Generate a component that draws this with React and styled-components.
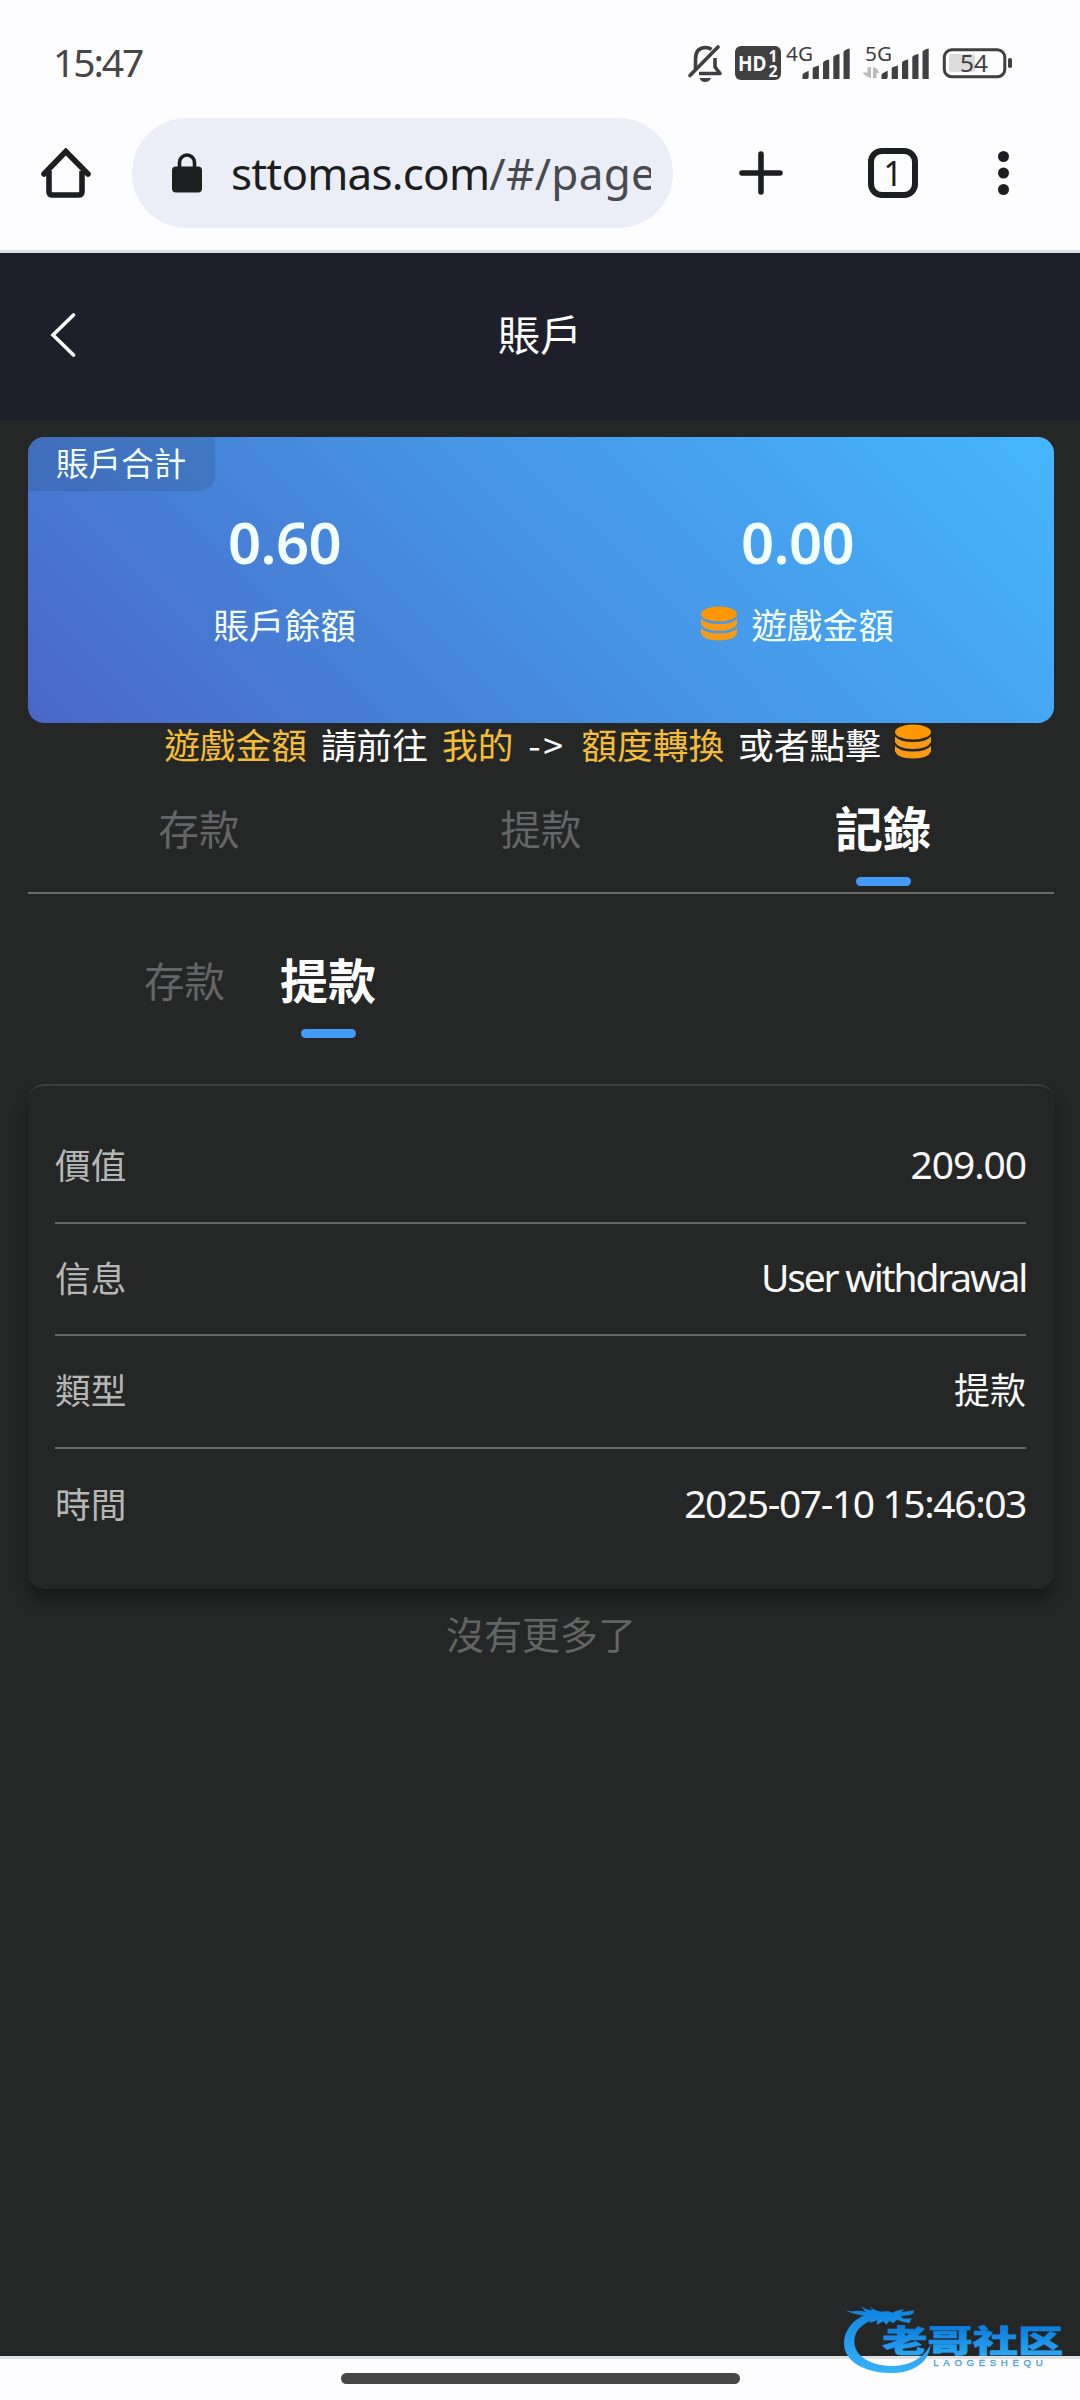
import React from 'react';
import styled, { createGlobalStyle } from 'styled-components';

// Styles
//----------------------------------------------------------------------------------//

const GlobalStyle = createGlobalStyle`
    * {
        box-sizing: border-box;
    }

    body {
        margin: 0;
        background-color: #252726;
        font-family: 'Noto Sans', 'Noto Sans CJK TC', sans-serif;
    }

    svg {
        display: block;
        flex: none;
    }
`;

const Screen = styled.div`
    position: relative;
    display: flex;
    flex-direction: column;
    width: 1080px;
    height: 2400px;
    overflow: hidden;
    background-color: #252726;
`;

const StatusBar = styled.div`
    display: flex;
    align-items: flex-start;
    justify-content: space-between;
    height: 118px;
    padding: 35px 64px 0 53px;
    background-color: #fdfdff;
`;

const Clock = styled.span`
    margin-top: 7px;
    font-size: 39px;
    line-height: 40px;
    letter-spacing: -2.1px;
    color: #464646;
`;

const StatusIcons = styled.div`
    display: flex;
`;

const Toolbar = styled.div`
    display: flex;
    align-items: center;
    height: 135px;
    padding: 0 71px 22px 41px;
    background-color: #fdfdff;
    border-bottom: 3px solid #dee1e7;
`;

const AddressBar = styled.div`
    display: flex;
    align-items: center;
    width: 541px;
    height: 110px;
    margin-left: 41px;
    margin-right: 66px;
    padding: 0 22px 0 40px;
    border-radius: 55px;
    background-color: #ebeef7;
`;

const Url = styled.div`
    flex: 1;
    margin-left: 29px;
    overflow: hidden;
    white-space: nowrap;
    font-size: 44px;
    line-height: 60px;
    letter-spacing: -0.8px;
    color: #1c1e20;
`;

const UrlPath = styled.span`
    letter-spacing: 0.3px;
    color: #474a51;
`;

const TabCount = styled.div`
    display: flex;
    align-items: center;
    justify-content: center;
    width: 50px;
    height: 50px;
    margin-left: 85px;
    margin-right: 80px;
    border: 6px solid #1d1e20;
    border-radius: 14px;
    font-size: 34px;
    line-height: 34px;
    color: #1d1e20;
`;

const Header = styled.header`
    display: grid;
    grid-template-columns: 80px 1fr 80px;
    align-items: center;
    height: 167px;
    padding-bottom: 3px;
    background-color: #1e1f2b;
`;

const BackButton = styled.button`
    padding: 0 0 0 50px;
    border: none;
    background: none;
`;

const Title = styled.h1`
    margin: 0;
    padding-bottom: 4px;
    text-align: center;
    font-family: 'Noto Sans CJK TC', sans-serif;
    font-size: 42px;
    font-weight: 400;
    line-height: 60px;
    color: #fff;
`;

const Content = styled.main`
    flex: 1;
    padding: 17px 26px 0 28px;
`;

const BalanceCard = styled.section`
    height: 286px;
    border-radius: 16px;
    overflow: hidden;
    background: linear-gradient(45deg, #4a67c8 0%, #4683d8 33%, #469ae9 60%, #46b6ff 100%);
    color: #f4ffff;
`;

const CardTag = styled.div`
    width: 187px;
    height: 54px;
    padding-left: 28px;
    border-bottom-right-radius: 16px;
    background-color: rgba(40, 70, 110, 0.2);
    font-family: 'Noto Sans CJK TC', sans-serif;
    font-size: 32.6px;
    line-height: 49px;
`;

const Balances = styled.div`
    display: grid;
    grid-template-columns: 1fr 1fr;
`;

const Balance = styled.div`
    display: flex;
    flex-direction: column;
    align-items: center;
    padding-top: 16px;
`;

const Amount = styled.div`
    font-size: 58px;
    font-weight: 600;
    line-height: 70px;
    letter-spacing: -0.6px;
`;

const AmountLabel = styled.div`
    display: flex;
    gap: 14px;
    margin-top: 22px;
    font-family: 'Noto Sans CJK TC', sans-serif;
    font-size: 35.7px;
    line-height: 50px;

    svg {
        margin-top: 7px;
    }
`;

const Hint = styled.div`
    display: flex;
    justify-content: center;
    gap: 14px;
    height: 54px;
    padding-left: 13px;
    font-family: 'Noto Sans CJK TC', sans-serif;
    font-size: 35.7px;
    line-height: 41px;
    color: #fff;

    svg {
        margin-top: 1px;
    }
`;

const Accent = styled.span`
    color: #f3bd38;
`;

const Arrow = styled.span`
    width: 40px;
    padding-left: 1px;
    letter-spacing: 2.5px;
`;

const Tabs = styled.nav`
    display: grid;
    grid-template-columns: repeat(3, 1fr);
    height: 117px;
    border-bottom: 2px solid #6b6b6b;
`;

const SubTabs = styled.nav`
    display: flex;
    gap: 55px;
    height: 190px;
    padding: 35px 0 0 116px;
`;

const Tab = styled.div`
    display: flex;
    flex-direction: column;
    align-items: center;
    font-family: 'Noto Sans CJK TC', sans-serif;
    font-size: ${props => props.$active ? '48px' : '40.5px'};
    font-weight: ${props => props.$active ? 700 : 400};
    line-height: ${props => props.$active ? '98px' : '102px'};
    color: ${props => props.$active ? '#fff' : '#646566'};

    &::after {
        content: '';
        display: ${props => props.$active ? 'block' : 'none'};
        width: 55px;
        height: 9px;
        margin-top: 2px;
        border-radius: 5px;
        background-color: #459af5;
    }
`;

const RecordCard = styled.section`
    height: 505px;
    padding: 25px 28px 0 27px;
    border-top: 2px solid #3b3c3c;
    border-radius: 16px;
    background-color: #252726;
    box-shadow: 0 12px 16px -2px rgba(0, 0, 0, 0.4);
`;

const Row = styled.div`
    display: flex;
    align-items: center;
    justify-content: space-between;
    height: 112.7px;
    padding-bottom: 6px;
    border-bottom: 2px solid #656666;

    &:last-child {
        border-bottom: none;
    }
`;

const Label = styled.span`
    font-family: 'Noto Sans CJK TC', sans-serif;
    font-size: 35.7px;
    color: #b5b7b6;
`;

const Value = styled.span`
    font-size: ${props => props.$cjk ? '36px' : '39px'};
    letter-spacing: ${props => props.$spacing || '0'};
    color: #f8f8f8;
`;

const NoMore = styled.div`
    margin-top: 16px;
    text-align: center;
    font-family: 'Noto Sans CJK TC', sans-serif;
    font-size: 38px;
    line-height: 56px;
    color: #636464;
`;

const NavigationBar = styled.footer`
    display: flex;
    justify-content: center;
    height: 44px;
    padding-top: 14px;
    border-top: 3px solid #e0e1e2;
    background-color: #fdfdff;
`;

const HomeHandle = styled.div`
    width: 399px;
    height: 11px;
    border-radius: 6px;
    background-color: #474747;
`;

const Watermark = styled.div`
    position: absolute;
    right: 0;
    bottom: 0;
`;

// Icons
//----------------------------------------------------------------------------------//

const SystemIcons = () => (
    <svg width="328" height="50" viewBox="0 -10 328 50" fill="#404040" fontFamily="'Noto Sans', sans-serif">
        {/* muted bell */}
        <g fill="none" stroke="#404040" strokeWidth="3.6">
            <path d="M7.5 25 V14.5 Q7.5 2.5 17.5 2.5 Q21 2.5 23.5 4.5" />
            <path d="M27 13 V22 L32 28.5 H11" strokeLinejoin="round" />
            <path d="M2 30.5 L30 2" strokeLinecap="round" />
        </g>
        <path d="M11.5 33 H23 Q21.5 37 17 37 Q13 37 11.5 33 Z" />
        {/* HD badge */}
        <rect x="47" y="1" width="46" height="34" rx="6" />
        <g fill="#fdfdff" fontWeight="700">
            <text x="50" y="25.5" fontSize="21" textLength="28.5" lengthAdjust="spacingAndGlyphs">HD</text>
            <text x="80.5" y="16.5" fontSize="15.5">1</text>
            <text x="80.5" y="31.5" fontSize="16">2</text>
        </g>
        <text x="98" y="16" fontSize="20.5" textLength="27" lengthAdjust="spacingAndGlyphs">4G</text>
        <text x="177" y="16" fontSize="20.5" textLength="27" lengthAdjust="spacingAndGlyphs">5G</text>
        <g id="signal">
            <path d="M114.5 34 V30 Q114.500 28 120.700 25.700 V32 Q120.700 34 118.700 34 Z" />
            <path d="M124.700 34 V23 Q125 22 130.900 20.500 V34 Z" />
            <path d="M135 34 V17.500 Q136 15.500 141.200 14.500 V34 Z" />
            <path d="M145.300 34 V12 Q146.300 10 151.500 9 V34 Z" />
            <path d="M155.500 34 V7 Q156.500 4.500 161.700 3.500 V34 Z" />
        </g>
        <use href="#signal" x="79" />
        <g fill="#bcbcbc">
            <path d="M179.5 22 H183 V33 Q177 31 174.500 27.500 H179.500 Z" />
            <path d="M185 33 V22 Q190 23 191 28 H188.500 V33 Z" />
        </g>
        {/* battery */}
        <rect x="261" y="9" width="26" height="18" rx="2" fill="#dcdcdc" />
        <rect x="256.3" y="4.800" width="60.500" height="27" rx="7.500" fill="none" stroke="#404040" strokeWidth="3" />
        <text x="272" y="26.5" fontSize="24" textLength="28" lengthAdjust="spacingAndGlyphs">54</text>
        <rect x="320" y="13" width="4" height="10" rx="1.8" />
    </svg>
);

const HomeIcon = () => (
    <svg width="50" height="50" viewBox="0 0 50 50" fill="none" stroke="#1d1e20" strokeWidth="5.6" strokeLinejoin="round">
        <path d="M8 23 V43.500 Q8 47 11.500 47 H37.500 Q41 47 41 43.500 V23" />
        <path d="M3 26 L24.800 3.500 L47 26" strokeLinecap="round" strokeLinejoin="miter" />
    </svg>
);

const LockIcon = () => (
    <svg width="30" height="40" viewBox="0 0 30 40">
        <rect y="13.5" width="30" height="26" rx="4" fill="#1d1e20" />
        <path d="M7.500 15 V9.500 A7.500 7.500 0 0 1 22.500 9.500 V15" fill="none" stroke="#1d1e20" strokeWidth="3.6" />
    </svg>
);

const PlusIcon = () => (
    <svg width="44" height="44" viewBox="0 0 44 44" stroke="#1d1e20" strokeWidth="5.6" strokeLinecap="round">
        <path d="M22 3 V41 M3 22 H41" />
    </svg>
);

const MenuIcon = () => (
    <svg width="11" height="44" viewBox="0 0 11 44" fill="#1d1e20">
        <circle cx="5.5" cy="5.5" r="5.5" />
        <circle cx="5.5" cy="22" r="5.5" />
        <circle cx="5.5" cy="38.5" r="5.5" />
    </svg>
);

const BackIcon = () => (
    <svg width="26" height="44" viewBox="0 0 26 44" fill="none" stroke="#fff" strokeWidth="3.6" strokeLinecap="round">
        <path d="M23.500 2 L3 22 L23.500 42" />
    </svg>
);

const CoinsIcon = () => (
    <svg width="36" height="35" viewBox="0 0 36 35" fill="#f89a14">
        <ellipse cx="18" cy="8" rx="18" ry="7.5" fill="#ff9800" />
        <path d="M0 12.500 Q5 18 18 18 Q31 18 36 12.500 V18 Q33 25 18 25 Q3 25 0 18 Z" />
        <path d="M0 22 Q5 27.500 18 27.500 Q31 27.500 36 22 V27.500 Q33 34.500 18 34.500 Q3 34.500 0 27.500 Z" />
    </svg>
);

const DragonLogo = () => (
    <svg width="260" height="120" viewBox="0 0 780 360">
        <defs>
            <linearGradient id="dragon" x1="0" y1="80" x2="0" y2="280" gradientUnits="userSpaceOnUse">
                <stop offset="0" stopColor="#0e83e0" />
                <stop offset="1" stopColor="#38b2f8" />
            </linearGradient>
            <linearGradient id="letters" x1="0" y1="140" x2="0" y2="230" gradientUnits="userSpaceOnUse">
                <stop offset="0" stopColor="#0c7cdb" />
                <stop offset="1" stopColor="#2ba9f4" />
            </linearGradient>
        </defs>
        <g fill="url(#dragon)">
            <path d="M160 98 C110 105 72 145 72 190 C72 245 135 279 210 279 C275 279 326 252 332 194 C306 240 262 259 212 258 C150 256 104 228 103 186 C102 150 130 126 172 116 Z" />
            <path d="M65 84 Q78 96 105 93 Q123 90 137 96 L122 78 Q142 91 157 91 L149 80 Q166 93 187 95 Q205 92 219 98 Q230 90 253 88 L243 97 L281 91 Q286 102 266 106 L242 108 L250 116 L275 115 L268 129 Q241 124 231 119 L219 130 L208 122 L199 134 L190 124 L170 135 L172 121 L149 129 L158 111 L137 107 Q92 104 65 84 Z" />
        </g>
        <text
            x="187"
            y="217"
            fill="url(#letters)"
            stroke="url(#letters)"
            strokeWidth="2"
            fontFamily="'Noto Sans CJK SC', sans-serif"
            fontSize="92"
            fontWeight="900"
            textLength="543"
            lengthAdjust="spacingAndGlyphs"
        >
            老哥社区
        </text>
        <text x="340" y="258" fill="#4a9fd8" stroke="#4a9fd8" fontFamily="'Liberation Sans', sans-serif" fontSize="29" textLength="328">
            LAOGESHEQU
        </text>
    </svg>
);

//----------------------------------------------------------------------------------//

const record = [
    { label: '價值', value: '209.00', spacing: '-1.1px' },
    { label: '信息', value: 'User withdrawal', spacing: '-2.2px' },
    { label: '類型', value: '提款', cjk: true },
    { label: '時間', value: '2025-07-10 15:46:03', spacing: '-1.4px' },
];

const App = () => (
    <>
        <GlobalStyle />
        <Screen>
            <StatusBar>
                <Clock>15:47</Clock>
                <StatusIcons><SystemIcons /></StatusIcons>
            </StatusBar>
            <Toolbar>
                <HomeIcon />
                <AddressBar>
                    <LockIcon />
                    <Url>sttomas.com<UrlPath>/#/page</UrlPath></Url>
                </AddressBar>
                <PlusIcon />
                <TabCount>1</TabCount>
                <MenuIcon />
            </Toolbar>
            <Header>
                <BackButton><BackIcon /></BackButton>
                <Title>賬戶</Title>
            </Header>
            <Content>
                <BalanceCard>
                    <CardTag>賬戶合計</CardTag>
                    <Balances>
                        <Balance>
                            <Amount>0.60</Amount>
                            <AmountLabel>賬戶餘額</AmountLabel>
                        </Balance>
                        <Balance>
                            <Amount>0.00</Amount>
                            <AmountLabel><CoinsIcon />遊戲金額</AmountLabel>
                        </Balance>
                    </Balances>
                </BalanceCard>
                <Hint>
                    <Accent>遊戲金額</Accent>
                    <span>請前往</span>
                    <Accent>我的</Accent>
                    <Arrow>-&gt;</Arrow>
                    <Accent>額度轉換</Accent>
                    <span>或者點擊</span>
                    <CoinsIcon />
                </Hint>
                <Tabs>
                    <Tab>存款</Tab>
                    <Tab>提款</Tab>
                    <Tab $active>記錄</Tab>
                </Tabs>
                <SubTabs>
                    <Tab>存款</Tab>
                    <Tab $active>提款</Tab>
                </SubTabs>
                <RecordCard>
                    {record.map(({ label, value, cjk, spacing }) => (
                        <Row key={label}>
                            <Label>{label}</Label>
                            <Value $cjk={cjk} $spacing={spacing}>{value}</Value>
                        </Row>
                    ))}
                </RecordCard>
                <NoMore>沒有更多了</NoMore>
            </Content>
            <NavigationBar>
                <HomeHandle />
            </NavigationBar>
            <Watermark><DragonLogo /></Watermark>
        </Screen>
    </>
)

export default App;
